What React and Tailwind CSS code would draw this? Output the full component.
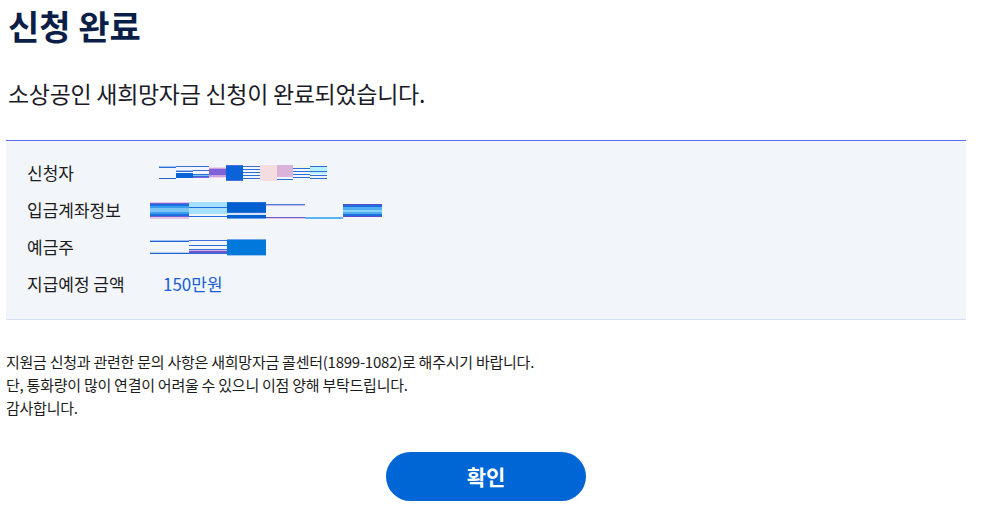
import React from 'react'

// 가려진 개인정보 표시용 줄무늬 조각
const row1 = [
  [[1, 'transparent'], [1, '#9fc0ee'], [1, '#2a6fd8'], [10, 'transparent'], [1, '#1f64d6'], [2, 'transparent']],
  [[1, 'transparent'], [1, '#3c6fd8'], [3, 'transparent'], [1, '#9fc0ee'], [1, '#2a6fd8'], [1, 'transparent'], [5, '#0a63d8'], [3, 'transparent']],
  [[1, 'transparent'], [1, '#2a6fd8'], [3, 'transparent'], [1, '#3c6fd8'], [3, 'transparent'], [1, '#2a6fd8'], [1, '#7cc4f2'], [1, '#2a6fd8'], [1, '#8a5fd8'], [3, 'transparent']],
  [[2, 'transparent'], [1, '#efd6e8'], [1, '#c8a0e0'], [6, '#8062d8'], [2, '#c8a0e0'], [1, '#efd6e8'], [3, 'transparent']],
  [[1, '#4b6fd8'], [14, '#0a63d8'], [1, '#4b6fd8']],
  [[1, 'transparent'], [1, '#3c6fd8'], [2, 'transparent'], [1, '#2a6fd8'], [2, 'transparent'], [1, '#2a6fd8'], [2, 'transparent'], [1, '#2a6fd8'], [2, 'transparent'], [1, '#2a6fd8'], [2, 'transparent']],
  [[16, '#f3dde0']],
  [[12, '#dab3d8'], [2, 'transparent'], [1, '#2a6fd8'], [1, 'transparent']],
  [[1, '#f1f6ea'], [2, '#f1f6ea'], [1, '#2a6fd8'], [2, 'transparent'], [1, '#2a6fd8'], [2, 'transparent'], [1, '#2a6fd8'], [2, 'transparent'], [1, '#2a6fd8'], [3, 'transparent']],
  [[1, 'transparent'], [1, '#2a6fd8'], [4, '#b9f1fa'], [1, '#2a6fd8'], [2, '#b9f1fa'], [1, 'transparent'], [1, '#2a6fd8'], [2, 'transparent'], [1, '#2a6fd8'], [2, 'transparent']],
]

const row2 = [
  [[1, '#e3c4e2'], [1, '#7060d8'], [2, '#1d6fe0'], [2, '#3a9ef0'], [4, '#7cc4f6'], [2, '#3a9ef0'], [2, '#1d6fe0'], [1, '#7060d8'], [2, '#e3c4e2']],
  [[5, '#a6e0fa'], [1, '#1d6fe0'], [6, '#a6e0fa'], [2, 'transparent'], [1, '#1d6fe0'], [2, 'transparent']],
  [[1, '#2a6fd8'], [9, '#0060d0'], [1, '#2a6fd8'], [2, '#d9e4f6'], [3, '#0060d0'], [1, '#6ea4e8']],
  [[2, 'transparent'], [1, '#4c7fdc'], [1, '#c9b8e6'], [11, 'transparent'], [1, '#6a5bd2'], [1, '#e6c6e0']],
  [[15, 'transparent'], [2, '#5ab4f0']],
  [[2, 'transparent'], [1, '#5a4fd0'], [2, '#1d6fe0'], [3, '#52aef2'], [2, '#8ad4f8'], [2, '#52aef2'], [2, '#1d6fe0'], [1, '#5a4fd0'], [2, 'transparent']],
]

const row3 = [
  [[1, 'transparent'], [1, '#9fc0ee'], [1, '#1f64d6'], [10, 'transparent'], [1, '#b7cdee'], [1, '#1f64d6'], [2, 'transparent']],
  [[1, 'transparent'], [1, '#3c6fd8'], [4, 'transparent'], [1, '#2a6fd8'], [3, 'transparent'], [1, '#3c6fd8'], [1, '#d6b4e2'], [2, '#6b55cc'], [1, '#2a6fd8'], [2, 'transparent']],
  [[1, '#6ea4e8'], [15, '#0078dc'], [1, '#9fc4ee']],
]

function Redacted({ segments, width, height }) {
  return (
    <div className="flex" style={{ height }}>
      {segments.map((seg, i) => (
        <div key={i} className="flex flex-col" style={{ width }}>
          {seg.map(([h, c], j) => (
            <div key={j} style={{ height: h, backgroundColor: c }} />
          ))}
        </div>
      ))}
    </div>
  )
}

function Row({ label, children }) {
  return (
    <div className="flex h-6 items-center">
      <div className="w-[123px] shrink-0 text-[17px] text-[#1c1c1c]">{label}</div>
      <div className="flex items-center">{children}</div>
    </div>
  )
}

export default function App() {
  return (
    <div
      className="min-h-screen bg-white px-[6px] pt-[5px]"
      style={{ fontFamily: '"Noto Sans CJK KR", "Noto Sans", sans-serif' }}
    >
      <h1 className="pl-[2px] text-[34px] font-bold leading-[42px] text-[#0b1e48]">신청 완료</h1>
      <p className="mt-[31px] pl-[2px] text-[23px] leading-[30px] tracking-[-0.3px] text-[#1b1b29]">
        소상공인 새희망자금 신청이 완료되었습니다.
      </p>

      <div className="mt-[32px] w-[960px] border-t border-b border-t-[#5a6cf0] border-b-[#d6e0f5] bg-[#f2f5fa] pt-5 pb-[23px] pl-[21px]">
        <div className="flex flex-col gap-[13px]">
          <Row label="신청자">
            <div className="pl-[9px]">
              <Redacted segments={row1} width={16.8} height={16} />
            </div>
          </Row>
          <Row label="입금계좌정보">
            <Redacted segments={row2} width={38.7} height={17} />
          </Row>
          <Row label="예금주">
            <Redacted segments={row3} width={38.7} height={17} />
          </Row>
          <Row label="지급예정 금액">
            <span className="pl-[13px] text-[17px] text-[#1560d4]">150만원</span>
          </Row>
        </div>
      </div>

      <div className="mt-[30px] text-[15px] leading-[23px] tracking-[-0.25px] text-[#1c1c1c]">
        <p>지원금 신청과 관련한 문의 사항은 새희망자금 콜센터(1899-1082)로 해주시기 바랍니다.</p>
        <p>단, 통화량이 많이 연결이 어려울 수 있으니 이점 양해 부탁드립니다.</p>
        <p>감사합니다.</p>
      </div>

      <div className="mt-[33px] flex w-[960px] justify-center">
        <button className="h-[49px] w-[200px] rounded-full bg-[#0066d6] text-[21px] font-bold text-white">
          확인
        </button>
      </div>
    </div>
  )
}
